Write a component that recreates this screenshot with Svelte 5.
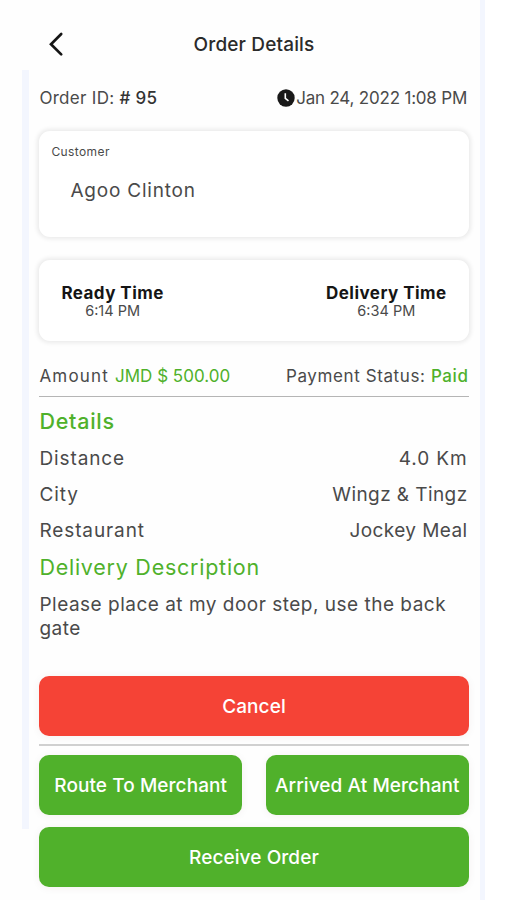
<script lang="ts">
  interface DetailRow {
    label: string;
    value: string;
    loose?: boolean;
  }

  const details: DetailRow[] = [
    { label: 'Distance', value: '4.0 Km', loose: true },
    { label: 'City', value: 'Wingz & Tingz' },
    { label: 'Restaurant', value: 'Jockey Meal' },
  ];

  const times = [
    { label: 'Ready Time', value: '6:14 PM' },
    { label: 'Delivery Time', value: '6:34 PM' },
  ];
</script>

<div class="screen">
  <div class="page">
    <header class="topbar">
      <button class="back" aria-label="Back">
        <svg width="16" height="26" viewBox="0 0 16 26" fill="none">
          <path d="M13.2 3L3 13.2L13.2 23.4" stroke="#151515" stroke-width="2.7" stroke-linecap="round" stroke-linejoin="miter" />
        </svg>
      </button>
      <h1>Order Details</h1>
    </header>

    <div class="body">
      <div class="rail"></div>
      <main>
        <div class="order-row">
          <span class="order-id">Order ID: <b># 95</b></span>
          <span class="order-date">
            <svg width="18" height="18" viewBox="0 0 18 18">
              <circle cx="9" cy="9" r="8.7" fill="#191919" />
              <path d="M8.3 4.2V9.3L11.5 11.8" stroke="#fff" stroke-width="1.6" fill="none" />
            </svg>
            <span>Jan 24, 2022 1:08 PM</span>
          </span>
        </div>

        <section class="card customer">
          <span class="caption">Customer</span>
          <span class="name">Agoo Clinton</span>
        </section>

        <section class="card times">
          {#each times as time}
            <div class="time">
              <strong>{time.label}</strong>
              <span>{time.value}</span>
            </div>
          {/each}
        </section>

        <div class="payment">
          <span class="amount">Amount <em>JMD $ 500.00</em></span>
          <span class="status">Payment Status: <em>Paid</em></span>
        </div>

        <h2 class="details-title">Details</h2>
        {#each details as row}
          <div class="detail">
            <span class="label">{row.label}</span>
            <span class="value" class:loose={row.loose}>{row.value}</span>
          </div>
        {/each}

        <h2 class="description-title">Delivery Description</h2>
        <p>Please place at my door step, use the back gate</p>

        <button class="action cancel">Cancel</button>
        <hr />
        <div class="merchant">
          <button class="action">Route To Merchant</button>
          <button class="action">Arrived At Merchant</button>
        </div>
        <button class="action receive">Receive Order</button>
      </main>
    </div>
  </div>
  <div class="edge"></div>
</div>

<style>
  :global(body) {
    background: #fff;
  }

  .screen {
    display: flex;
    width: 507px;
    height: 900px;
    overflow: hidden;
    font-family: Inter, 'Liberation Sans', sans-serif;
    color: #4a4a4a;
  }

  .page {
    width: 480px;
    background: #fefefe;
  }

  .edge {
    width: 5px;
    background: #f3f6fe;
  }

  .topbar {
    display: grid;
    grid-template-columns: 1fr auto 1fr;
    align-items: center;
    height: 70px;
    padding: 18px 20px 0 48px;
    box-sizing: border-box;
  }

  button {
    border: 0;
    padding: 0;
    font-family: inherit;
  }

  .back {
    width: 16px;
    height: 26px;
    background: none;
  }

  h1 {
    margin: 0;
    font-size: 19px;
    font-weight: 500;
    letter-spacing: 0.15px;
    color: #2b2b2b;
  }

  .body {
    display: flex;
  }

  .rail {
    flex: none;
    width: 7px;
    height: 759px;
    margin: 0 10.4px 0 22px;
    background: #f3f6fe;
  }

  main {
    display: flex;
    flex-direction: column;
    flex: none;
    width: 429.2px;
  }

  .order-row,
  .payment,
  .detail {
    display: flex;
    justify-content: space-between;
    align-items: center;
    white-space: nowrap;
  }

  .order-row {
    height: 56px;
    font-size: 17px;
  }

  .order-id {
    letter-spacing: 0.3px;
  }

  .order-id b {
    font-weight: 500;
    color: #333;
  }

  .order-date {
    display: flex;
    align-items: center;
    gap: 1px;
    padding-right: 1.5px;
    letter-spacing: -0.2px;
  }

  .card {
    box-sizing: border-box;
    border-radius: 11px;
    background: #fff;
    box-shadow: 0 0 4px 1.5px rgba(0, 0, 0, 0.08);
  }

  .customer {
    display: flex;
    flex-direction: column;
    height: 106px;
    margin-top: 5px;
    padding: 13px 12px;
  }

  .caption {
    font-size: 12px;
    line-height: 16px;
    letter-spacing: 0.4px;
  }

  .name {
    margin: 17px 0 0 19px;
    font-size: 19px;
    line-height: 28px;
    letter-spacing: 0.8px;
  }

  .times {
    display: flex;
    justify-content: space-between;
    height: 81px;
    margin-top: 23px;
    padding: 23px 22px 0;
  }

  .time {
    display: flex;
    flex-direction: column;
    align-items: center;
    font-size: 14.5px;
    line-height: 15px;
  }

  .time strong {
    font-size: 17px;
    line-height: 20px;
    font-weight: 700;
    letter-spacing: 0.45px;
    color: #151515;
  }

  .payment {
    height: 56px;
    padding-top: 14px;
    box-sizing: border-box;
    border-bottom: 1px solid #b5b5b5;
    font-size: 17px;
  }

  em {
    font-style: normal;
    color: #4fb12b;
  }

  .amount {
    letter-spacing: 1.2px;
  }

  .amount em {
    letter-spacing: 0;
  }

  .status {
    letter-spacing: 0.6px;
  }

  .status em {
    font-weight: 500;
  }

  h2 {
    margin: 0;
    font-size: 21.5px;
    font-weight: 500;
    line-height: 37px;
    letter-spacing: 0.75px;
    color: #4fb12b;
  }

  .details-title {
    margin-top: 6px;
  }

  .description-title {
    padding-top: 1px;
    font-weight: 400;
  }

  .detail {
    height: 36px;
    font-size: 19px;
    padding-right: 1px;
  }

  .label,
  .loose {
    letter-spacing: 0.9px;
  }

  .value:not(.loose) {
    letter-spacing: 0.42px;
  }

  p {
    margin: 7px 0 35px;
    font-size: 19px;
    line-height: 24px;
    letter-spacing: 0.5px;
  }

  .action {
    flex: none;
    height: 60px;
    padding-top: 1px;
    border-radius: 10px;
    background: #50b12b;
    box-shadow: 0 1px 8px rgba(90, 30, 30, 0.06);
    color: #fff;
    font-size: 19px;
    font-weight: 500;
    letter-spacing: 0.08px;
    white-space: nowrap;
  }

  .cancel {
    background: #f54336;
  }

  hr {
    width: 100%;
    height: 2px;
    margin: 8px 0 9px;
    border: 0;
    background: #d0d0d0;
  }

  .merchant {
    display: grid;
    grid-template-columns: 1fr 1fr;
    gap: 24px;
  }

  .receive {
    margin-top: 12px;
  }
</style>
